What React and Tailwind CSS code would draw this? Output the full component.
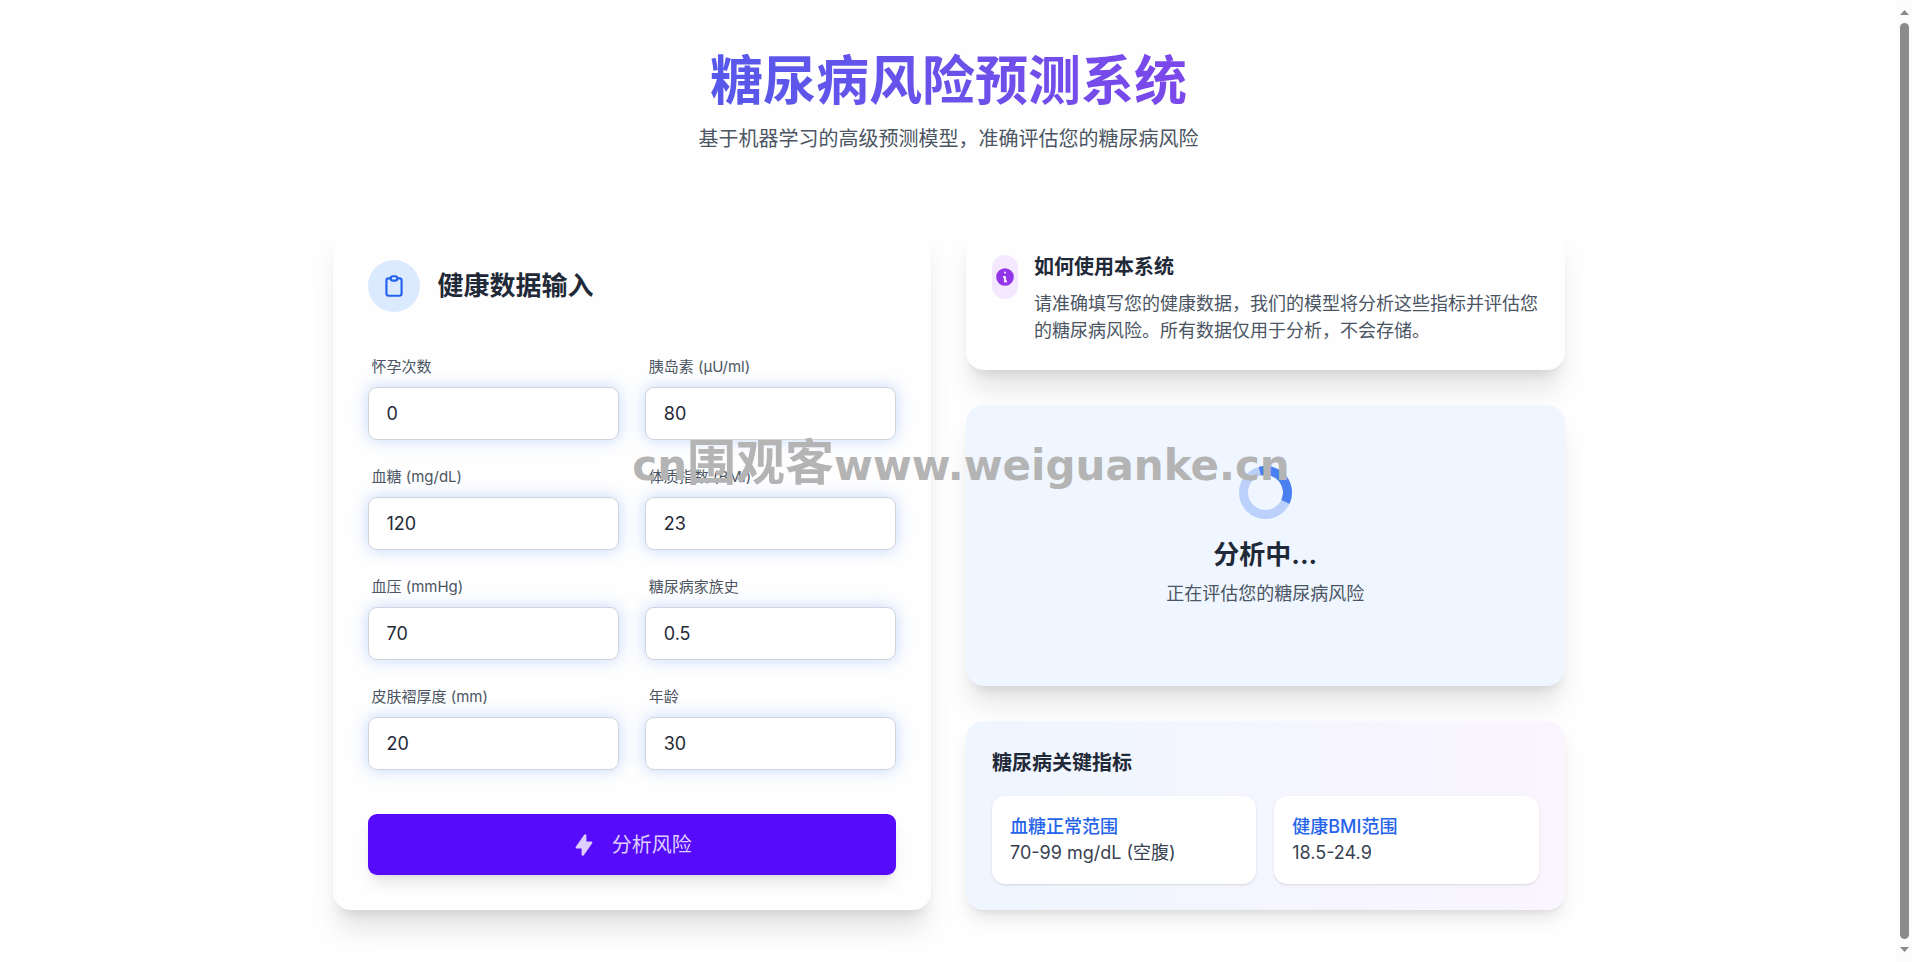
import { useState } from "react";

const fields = [
  { name: "pregnancies", label: "怀孕次数", value: "0" },
  { name: "insulin", label: "胰岛素 (μU/ml)", value: "80" },
  { name: "glucose", label: "血糖 (mg/dL)", value: "120" },
  { name: "bmi", label: "体质指数 (BMI)", value: "23" },
  { name: "bloodPressure", label: "血压 (mmHg)", value: "70" },
  { name: "pedigree", label: "糖尿病家族史", value: "0.5" },
  { name: "skinThickness", label: "皮肤褶厚度 (mm)", value: "20" },
  { name: "age", label: "年龄", value: "30" },
];

const indicators = [
  { title: "血糖正常范围", range: "70-99 mg/dL (空腹)" },
  { title: "健康BMI范围", range: "18.5-24.9" },
];

function HealthForm() {
  const [values, setValues] = useState(
    Object.fromEntries(fields.map((f) => [f.name, f.value]))
  );

  return (
    <section className="rounded-[18px] bg-[#fefefe] p-[35px] shadow-[0_24px_27px_-5px_rgba(0,0,0,0.1),0_9px_11px_-6px_rgba(0,0,0,0.1)]">
      <div className="mb-11 flex items-center gap-[18px]">
        <div className="flex h-[52px] w-[52px] items-center justify-center rounded-full bg-[#dbeafe] text-[#2563eb]">
          <svg width="26" height="26" viewBox="0 0 24 24" fill="none">
            <path
              d="M9 5H7a2 2 0 0 0-2 2v12a2 2 0 0 0 2 2h10a2 2 0 0 0 2-2V7a2 2 0 0 0-2-2h-2M9 5a2 2 0 0 0 2 2h2a2 2 0 0 0 2-2M9 5a2 2 0 0 1 2-2h2a2 2 0 0 1 2 2"
              stroke="currentColor"
              strokeWidth="2"
              strokeLinecap="round"
              strokeLinejoin="round"
            />
          </svg>
        </div>
        <h2 className="text-[26px] leading-9 font-bold text-[#1f2937]">健康数据输入</h2>
      </div>

      <form onSubmit={(e) => e.preventDefault()}>
        <div className="mb-11 grid grid-cols-2 gap-[26px]">
          {fields.map((field) => (
            <div key={field.name}>
              <label
                htmlFor={field.name}
                className="mb-[9px] ml-1 block text-[15px] leading-[22px] text-[#4b5563]"
              >
                {field.label}
              </label>
              <input
                id={field.name}
                type="text"
                inputMode="decimal"
                value={values[field.name]}
                onChange={(e) => setValues({ ...values, [field.name]: e.target.value })}
                className="block h-[53px] w-full rounded-[9px] border border-[#d1d5db] bg-white px-[18px] text-[18px] text-[#1f2937] shadow-[0_0_16px_rgba(59,130,246,0.3)] outline-none"
              />
            </div>
          ))}
        </div>
        <button
          type="submit"
          className="flex h-[61px] w-full items-center justify-center gap-4 rounded-[9px] bg-[#560bfa] text-[20px] text-[#decffe] shadow-lg"
        >
          <svg width="24" height="24" viewBox="0 0 20 20" fill="currentColor">
            <path
              fillRule="evenodd"
              clipRule="evenodd"
              d="M11.3 1.046A1 1 0 0112 2v5h4a1 1 0 01.82 1.573l-7 10A1 1 0 018 18v-5H4a1 1 0 01-.82-1.573l7-10a1 1 0 011.12-.38z"
            />
          </svg>
          <span>分析风险</span>
        </button>
      </form>
    </section>
  );
}

function UsageCard() {
  return (
    <section className="flex items-start gap-4 rounded-[18px] bg-[#fefefe] p-[26px] shadow-[0_24px_27px_-5px_rgba(0,0,0,0.1),0_9px_11px_-6px_rgba(0,0,0,0.1)]">
      <div className="mt-1 flex h-11 w-[26px] shrink-0 items-center justify-center rounded-full bg-[#f3e8ff] text-[#9333ea]">
        <svg width="22" height="22" viewBox="0 0 20 20" fill="currentColor">
          <path
            fillRule="evenodd"
            clipRule="evenodd"
            d="M18 10a8 8 0 11-16 0 8 8 0 0116 0zm-7-4a1 1 0 11-2 0 1 1 0 012 0zM9 9a1 1 0 000 2v3a1 1 0 001 1h1a1 1 0 100-2v-3a1 1 0 00-1-1H9z"
          />
        </svg>
      </div>
      <div className="flex-1">
        <h3 className="mb-1.5 text-[20px] leading-[33px] font-bold text-[#1f2937]">
          如何使用本系统
        </h3>
        <p className="text-[18px] leading-[27px] text-[#4b5563]">
          请准确填写您的健康数据，我们的模型将分析这些指标并评估您的糖尿病风险。所有数据仅用于分析，不会存储。
        </p>
      </div>
    </section>
  );
}

function AnalyzingCard() {
  return (
    <section className="flex flex-col items-center rounded-[18px] bg-[#eff6ff] pt-[61px] pb-[79px] shadow-[0_22px_27px_-5px_rgba(0,0,0,0.1),0_9px_11px_-6px_rgba(0,0,0,0.1)]">
      <svg width="53" height="53" viewBox="0 0 53 53" fill="none" className="mb-[18px]">
        <circle cx="26.5" cy="26.5" r="22" stroke="#bbd0fa" strokeWidth="9" />
        <path d="M20.81 5.25A22 22 0 0 1 46.44 35.8" stroke="#4a7ff0" strokeWidth="9" />
      </svg>
      <h3 className="mb-[9px] text-[26px] leading-[35px] font-bold text-[#1f2937]">分析中...</h3>
      <p className="text-[18px] leading-[26px] text-[#4b5563]">正在评估您的糖尿病风险</p>
    </section>
  );
}

function IndicatorsCard() {
  return (
    <section className="rounded-[18px] bg-linear-to-r from-[#eff6ff] to-[#faf5ff] p-[26px] shadow-[0_11px_17px_-3px_rgba(0,0,0,0.1),0_4px_7px_-4px_rgba(0,0,0,0.1)]">
      <h3 className="mb-4 text-[20px] leading-[33px] font-bold text-[#1f2937]">
        糖尿病关键指标
      </h3>
      <div className="grid grid-cols-2 gap-[18px]">
        {indicators.map((item) => (
          <div key={item.title} className="rounded-[13px] bg-white p-[18px] shadow-sm">
            <p className="text-[18px] leading-[26px] font-medium text-[#2563eb]">{item.title}</p>
            <p className="text-[18px] leading-[26px] text-[#374151]">{item.range}</p>
          </div>
        ))}
      </div>
    </section>
  );
}

function ScrollBar() {
  return (
    <div className="flex w-[15px] shrink-0 flex-col items-center justify-between bg-[#fcfcfc] py-[10px]">
      <svg width="9" height="5" viewBox="0 0 9 5" fill="#8b8b8b">
        <path d="M4.5 0L9 5H0z" />
      </svg>
      <div className="my-2 w-[9px] flex-1 rounded-full bg-[#8b8b8b]" />
      <svg width="9" height="5" viewBox="0 0 9 5" fill="#8b8b8b">
        <path d="M0 0H9L4.5 5z" />
      </svg>
    </div>
  );
}

export default function App() {
  return (
    <div className="relative flex h-screen overflow-hidden bg-white font-[Inter,'Noto_Sans_CJK_SC',sans-serif]">
      <main className="flex-1 overflow-hidden bg-[#fefefe]">
        <div className="mx-auto max-w-[1280px] px-6 pt-[50px]">
          <header className="mb-[71px] text-center">
            <h1 className="mb-[13px] bg-linear-to-r from-[#2563eb] to-[#9333ea] bg-clip-text text-[53px] leading-[62px] font-bold text-transparent">
              糖尿病风险预测系统
            </h1>
            <p className="text-[20px] leading-[29px] text-[#4b5563]">
              基于机器学习的高级预测模型，准确评估您的糖尿病风险
            </p>
          </header>
          <div className="grid grid-cols-2 gap-[35px]">
            <HealthForm />
            <div className="flex flex-col gap-[35px]">
              <UsageCard />
              <AnalyzingCard />
              <IndicatorsCard />
            </div>
          </div>
        </div>
      </main>
      <ScrollBar />
      <div className="pointer-events-none absolute inset-x-0 top-[434px] pl-[10px] text-center font-['DejaVu_Sans','Noto_Sans_CJK_SC',sans-serif] text-[42px] leading-[60px] font-bold whitespace-nowrap text-[#b4b4b4]">
        cn<span className="text-[49px]">围观客</span>www.weiguanke.cn
      </div>
    </div>
  );
}
